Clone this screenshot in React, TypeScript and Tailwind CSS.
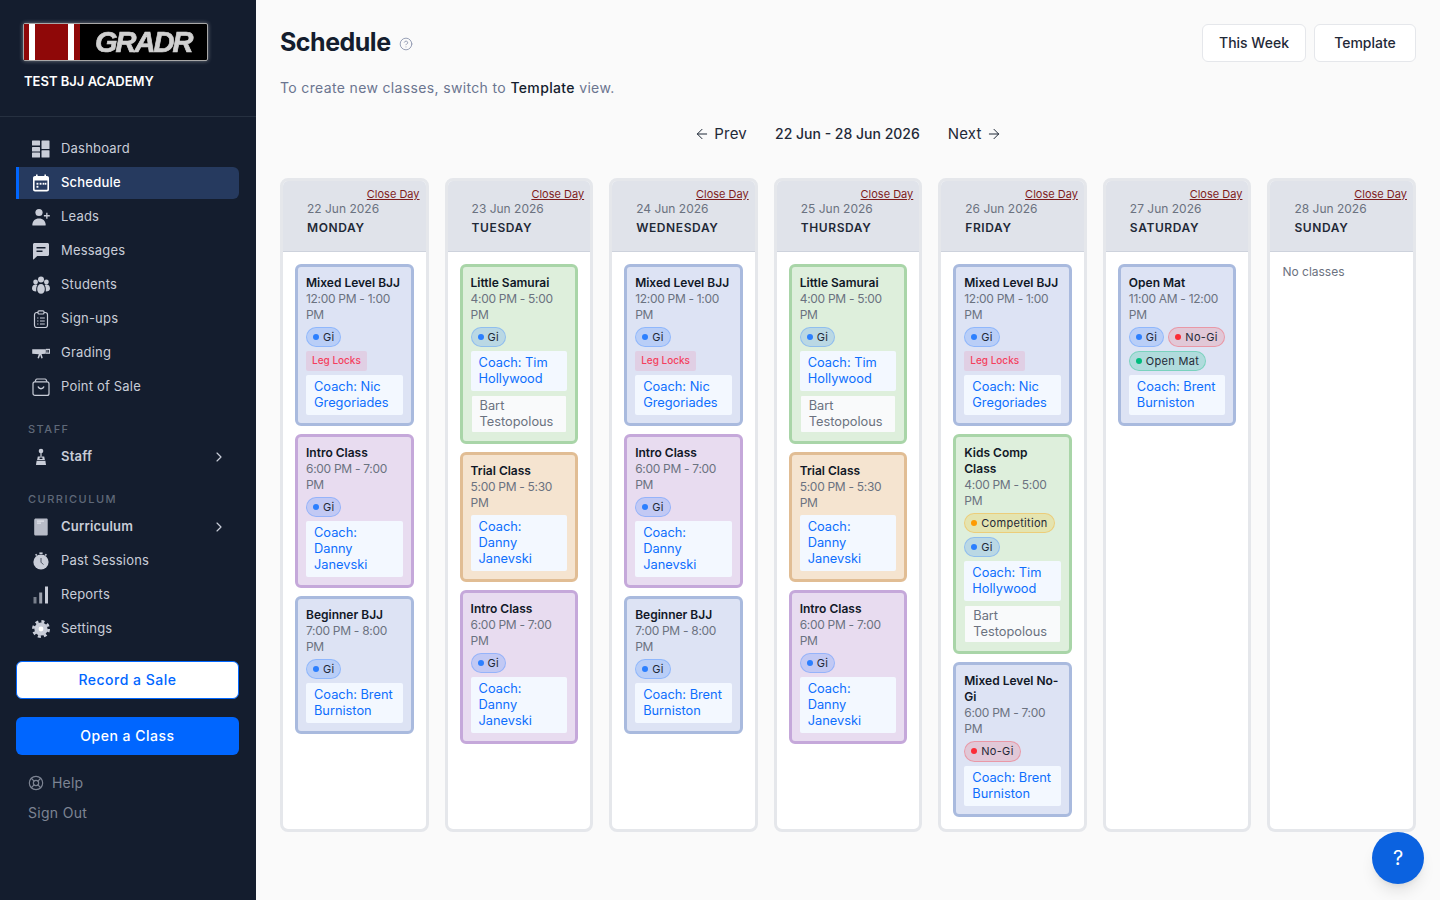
import { ArrowLeft, ArrowRight, ChevronRight, CircleHelp, LifeBuoy } from 'lucide-react'
import type { ReactNode } from 'react'

type Tone = 'blue' | 'green' | 'purple' | 'orange'
type ChipKind = 'gi' | 'nogi' | 'openmat' | 'comp'

interface ClassItem {
  title: string
  time: string
  tone: Tone
  chips: ChipKind[]
  legLocks?: boolean
  coach: string
  assistant?: string
}

interface Day {
  date: string
  name: string
  classes: ClassItem[]
}

const toneClasses: Record<Tone, string> = {
  blue: 'border-[#a9bade] bg-[#dde3f4]',
  green: 'border-[#a9d5a8] bg-[#deefdc]',
  purple: 'border-[#c5a8da] bg-[#e8dcf0]',
  orange: 'border-[#e1bd94] bg-[#f5e4d0]',
}

const chipClasses: Record<ChipKind, { label: string; box: string; dot: string }> = {
  gi: { label: 'Gi', box: 'border-blue-500/30 bg-blue-500/20', dot: 'bg-blue-500' },
  nogi: { label: 'No-Gi', box: 'border-red-500/30 bg-red-500/15', dot: 'bg-red-500' },
  openmat: { label: 'Open Mat', box: 'border-emerald-500/30 bg-emerald-500/20', dot: 'bg-emerald-500' },
  comp: { label: 'Competition', box: 'border-amber-500/30 bg-amber-400/20', dot: 'bg-amber-500' },
}

const mixed: ClassItem = {
  title: 'Mixed Level BJJ',
  time: '12:00 PM - 1:00 PM',
  tone: 'blue',
  chips: ['gi'],
  legLocks: true,
  coach: 'Coach: Nic Gregoriades',
}
const intro: ClassItem = {
  title: 'Intro Class',
  time: '6:00 PM - 7:00 PM',
  tone: 'purple',
  chips: ['gi'],
  coach: 'Coach: Danny Janevski',
}
const beginner: ClassItem = {
  title: 'Beginner BJJ',
  time: '7:00 PM - 8:00 PM',
  tone: 'blue',
  chips: ['gi'],
  coach: 'Coach: Brent Burniston',
}
const samurai: ClassItem = {
  title: 'Little Samurai',
  time: '4:00 PM - 5:00 PM',
  tone: 'green',
  chips: ['gi'],
  coach: 'Coach: Tim Hollywood',
  assistant: 'Bart Testopolous',
}
const trial: ClassItem = {
  title: 'Trial Class',
  time: '5:00 PM - 5:30 PM',
  tone: 'orange',
  chips: [],
  coach: 'Coach: Danny Janevski',
}

const days: Day[] = [
  { date: '22 Jun 2026', name: 'MONDAY', classes: [mixed, intro, beginner] },
  { date: '23 Jun 2026', name: 'TUESDAY', classes: [samurai, trial, intro] },
  { date: '24 Jun 2026', name: 'WEDNESDAY', classes: [mixed, intro, beginner] },
  { date: '25 Jun 2026', name: 'THURSDAY', classes: [samurai, trial, intro] },
  {
    date: '26 Jun 2026',
    name: 'FRIDAY',
    classes: [
      mixed,
      {
        title: 'Kids Comp Class',
        time: '4:00 PM - 5:00 PM',
        tone: 'green',
        chips: ['comp', 'gi'],
        coach: 'Coach: Tim Hollywood',
        assistant: 'Bart Testopolous',
      },
      {
        title: 'Mixed Level No-Gi',
        time: '6:00 PM - 7:00 PM',
        tone: 'blue',
        chips: ['nogi'],
        coach: 'Coach: Brent Burniston',
      },
    ],
  },
  {
    date: '27 Jun 2026',
    name: 'SATURDAY',
    classes: [
      {
        title: 'Open Mat',
        time: '11:00 AM - 12:00 PM',
        tone: 'blue',
        chips: ['gi', 'nogi', 'openmat'],
        coach: 'Coach: Brent Burniston',
      },
    ],
  },
  { date: '28 Jun 2026', name: 'SUNDAY', classes: [] },
]

function Icon({ children }: { children: ReactNode }) {
  return (
    <svg viewBox="0 0 18 18" className="h-[18px] w-[18px] shrink-0" fill="currentColor">
      {children}
    </svg>
  )
}

const DashboardIcon = () => (
  <Icon>
    <rect x="0" y="0.5" width="8" height="5" rx="0.5" />
    <rect x="0" y="7" width="8" height="4.5" rx="0.5" />
    <rect x="0" y="12.5" width="8" height="5" rx="0.5" />
    <rect x="9.5" y="0.5" width="8" height="8.5" rx="0.5" />
    <rect x="9.5" y="10.3" width="8" height="7.2" rx="0.5" />
  </Icon>
)

const CalendarIcon = () => (
  <Icon>
    <path
      fillRule="evenodd"
      d="M4 0.5h1.6v1.6h6.8V0.5H14v1.6h1c1.1 0 2 .9 2 2v11.4c0 1.1-.9 2-2 2H3c-1.1 0-2-.9-2-2V4.1c0-1.1.9-2 2-2h1V0.5ZM2.6 6.6v8.7c0 .2.2.4.4.4h12c.2 0 .4-.2.4-.4V6.6H2.6Z"
    />
    <rect x="4.5" y="8.8" width="1.9" height="1.9" />
    <rect x="7.6" y="8.8" width="1.9" height="1.9" />
    <rect x="10.6" y="8.8" width="1.9" height="1.9" />
    <rect x="13" y="8.8" width="1.4" height="1.9" />
    <rect x="4.5" y="11.8" width="1.9" height="1.9" />
  </Icon>
)

const LeadsIcon = () => (
  <Icon>
    <circle cx="7" cy="4.5" r="3.6" />
    <path d="M0.3 17c0-3.9 2.7-6.6 6.7-6.6s6.7 2.7 6.7 6.6c0 .4-.3.6-.6.6H.9c-.3 0-.6-.2-.6-.6Z" />
    <path d="M14.2 4.8h1.3v2.3h2.3v1.3h-2.3v2.3h-1.3V8.4h-2.3V7.1h2.3V4.8Z" />
  </Icon>
)

const MessagesIcon = () => (
  <Icon>
    <path
      fillRule="evenodd"
      d="M2.5 1h13c.8 0 1.5.7 1.5 1.5v10c0 .8-.7 1.5-1.5 1.5H5.2L1.6 17.4c-.2.2-.6.1-.6-.3V2.5C1 1.7 1.7 1 2.5 1ZM4.5 5v1.6h9V5h-9Zm0 3.4V10h6V8.4h-6Z"
    />
  </Icon>
)

const StudentsIcon = () => (
  <Icon>
    <circle cx="9" cy="3.6" r="3" />
    <circle cx="3.6" cy="6" r="2.4" />
    <circle cx="14.4" cy="6" r="2.4" />
    <path d="M0 12.5c0-2.6 1.5-4 3.6-4 .7 0 1.3.2 1.8.4-.8 1-1.2 2.3-1.2 3.9v2.6C1.6 15.4 0 14.5 0 12.5Zm18 0c0 2-1.6 2.9-4.2 2.9v-2.6c0-1.6-.4-2.9-1.2-3.9.5-.2 1.1-.4 1.8-.4 2.1 0 3.6 1.4 3.6 4Z" />
    <path d="M5.2 13c0-3 1.5-5 3.8-5s3.8 2 3.8 5c0 3.2-1.5 4.8-3.8 4.8S5.2 16.2 5.2 13Z" />
  </Icon>
)

const SignupsIcon = () => (
  <svg viewBox="0 0 18 18" className="h-[18px] w-[18px] shrink-0" fill="none" stroke="currentColor">
    <rect x="2.5" y="2.5" width="13" height="15" rx="2.2" strokeWidth="1.2" />
    <rect x="6" y="0.8" width="6" height="3.2" rx="1" fill="#141d2e" strokeWidth="1.2" />
    <path d="M5.2 8h1.2M8 8h4.8M5.2 11h1.2M8 11h4.8M5.2 14h1.2M8 14h4.8" strokeWidth="1.2" />
  </svg>
)

const GradingIcon = () => (
  <Icon>
    <path d="M0.2 5.2h13.6v4.6c-4.6.6-9 .6-13.6 0V5.2Z" />
    <path d="M13.8 4.8H18v5h-4.2V4.8Z" />
    <path d="M7 9.5h2.4l1.4 4.6-1.4.4L8.2 11l-1.3 3.5-1.4-.4L7 9.5Z" />
    <rect x="14.4" y="6" width="1.2" height="2.6" fill="#141d2e" />
    <rect x="16.2" y="6" width="0.8" height="2.6" fill="#141d2e" />
  </Icon>
)

const SaleIcon = () => (
  <svg viewBox="0 0 18 18" className="h-[18px] w-[18px] shrink-0" fill="none" stroke="currentColor" strokeWidth="1.2">
    <rect x="1" y="3.8" width="16" height="13.6" rx="2" />
    <path d="M3 3.8 4 1.6c.2-.4.5-.6.9-.6h8.2c.4 0 .7.2.9.6l1 2.2" />
    <path d="M6 8.6c.6 1.5 1.6 2.2 3 2.2s2.4-.7 3-2.2" strokeWidth="1.4" />
  </svg>
)

const StaffIcon = () => (
  <Icon>
    <circle cx="9" cy="3" r="2.3" />
    <rect x="8.4" y="4.5" width="1.2" height="4" />
    <path d="M5.8 8.5h6.4l.7 3.4-7.8 0 .7-3.4Z" />
    <path d="M4.6 12.8h8.8l.6 4.2H4l.6-4.2Z" />
    <rect x="7.4" y="9.6" width="3.2" height="1.4" rx="0.7" fill="#141d2e" />
  </Icon>
)

const CurriculumIcon = () => (
  <Icon>
    <path
      fillRule="evenodd"
      d="M3.8.5h11c.5 0 .9.4.9.9v15.2c0 .5-.4.9-.9.9h-11c-.9 0-1.6-.7-1.6-1.6V2.1c0-.9.7-1.6 1.6-1.6Z"
      opacity="0.9"
    />
    <rect x="5" y="2.6" width="7" height="1" fill="#e8eaf0" />
    <rect x="5" y="4.6" width="4" height="1" fill="#e8eaf0" />
  </Icon>
)

const StopwatchIcon = () => (
  <Icon>
    <circle cx="9" cy="10" r="7.6" />
    <rect x="7.4" y="0.4" width="3.2" height="1.6" />
    <path d="M3 2.8 4.2 1.8l1.2 1.2-1.2 1L3 2.8Zm12 0-1.2-1-1.2 1.2 1.2 1 1.2-1.2Z" />
    <path d="M9 6v4.2l2.4 2.4" fill="none" stroke="#141d2e" strokeWidth="1" opacity="0.7" />
  </Icon>
)

const ReportsIcon = () => (
  <Icon>
    <rect x="1.5" y="11" width="3" height="6.5" opacity="0.55" />
    <rect x="7.2" y="6.5" width="3" height="11" opacity="0.75" />
    <rect x="13" y="0.5" width="3" height="17" />
  </Icon>
)

const GearIcon = () => (
  <Icon>
    <circle cx="9" cy="9" r="6.6" />
    <circle cx="9" cy="9" r="7.6" fill="none" stroke="currentColor" strokeWidth="2.8" strokeDasharray="3 3" />
    <circle cx="9" cy="9" r="2.4" fill="#ffffff" />
  </Icon>
)

function NavItem({ icon, label, active, bold, chevron }: { icon: ReactNode; label: string; active?: boolean; bold?: boolean; chevron?: boolean }) {
  return (
    <div
      className={
        active
          ? 'flex h-8 items-center rounded-r-md border-l-[3px] border-[#0066ff] bg-[#263a5f] pl-[13px] pr-3 text-white'
          : 'flex h-8 items-center pl-4 pr-3 text-[#c9cdd8]'
      }
    >
      {icon}
      <span className={`ml-[11px] flex-1 text-[13px] tracking-[0.2px] ${bold ? 'font-semibold' : active ? 'font-medium' : ''}`}>{label}</span>
      {chevron && <ChevronRight className="h-4 w-4 text-[#c9cdd8]" strokeWidth={1.75} />}
    </div>
  )
}

function Sidebar() {
  return (
    <aside className="flex h-screen w-64 shrink-0 flex-col bg-[#141d2e]">
      <div className="h-[117px] border-b border-[#263040] pl-[23px] pt-[23px]">
        <div className="flex h-[38px] w-[185px] overflow-hidden rounded-[2px] border border-[#a8a8a8] bg-black shadow-[0_0_4px_rgba(255,255,255,0.4)]">
          <div className="w-[5px] bg-[#8f0808]" />
          <div className="w-[6px] bg-white" />
          <div className="w-[33px] bg-[#8f0808]" />
          <div className="w-[6px] bg-white" />
          <div className="w-[6px] bg-[#8f0808]" />
          <div className="flex flex-1 items-center pl-[15px]">
            <span className="font-['Liberation_Sans',sans-serif] text-[29px] font-bold italic leading-none tracking-[-2px] text-[#d0d0d0] blur-[0.4px] [-webkit-text-stroke:0.7px_#d0d0d0]">
              GRADR
            </span>
          </div>
        </div>
        <div className="ml-px mt-3 text-[13px] font-semibold leading-4 text-white">TEST BJJ ACADEMY</div>
      </div>

      <nav className="flex flex-col gap-0.5 pl-4 pr-[17px] pt-4">
        <NavItem icon={<DashboardIcon />} label="Dashboard" />
        <NavItem icon={<CalendarIcon />} label="Schedule" active />
        <NavItem icon={<LeadsIcon />} label="Leads" />
        <NavItem icon={<MessagesIcon />} label="Messages" />
        <NavItem icon={<StudentsIcon />} label="Students" />
        <NavItem icon={<SignupsIcon />} label="Sign-ups" />
        <NavItem icon={<GradingIcon />} label="Grading" />
        <NavItem icon={<SaleIcon />} label="Point of Sale" />
        <div className="mb-0.5 mt-4 pl-3 text-[11px] font-medium leading-4 tracking-[1.5px] text-[#5f6878]">STAFF</div>
        <NavItem icon={<StaffIcon />} label="Staff" bold chevron />
        <div className="mb-0.5 mt-4 pl-3 text-[11px] font-medium leading-4 tracking-[1.5px] text-[#5f6878]">CURRICULUM</div>
        <NavItem icon={<CurriculumIcon />} label="Curriculum" bold chevron />
        <NavItem icon={<StopwatchIcon />} label="Past Sessions" />
        <NavItem icon={<ReportsIcon />} label="Reports" />
        <NavItem icon={<GearIcon />} label="Settings" />
      </nav>

      <div className="flex flex-col gap-[18px] pl-4 pr-[17px] pt-4">
        <button className="h-[38px] rounded-md border border-[#0066ff] bg-white text-sm font-medium tracking-[0.5px] text-[#0066ff]">Record a Sale</button>
        <button className="h-[38px] rounded-md bg-[#0066ff] text-sm font-medium tracking-[0.5px] text-white">Open a Class</button>
      </div>

      <div className="flex items-center gap-2 pl-7 pt-[18px] text-sm leading-5 tracking-[0.2px] text-[#7d8493]">
        <LifeBuoy className="h-4 w-4" strokeWidth={1.75} />
        Help
      </div>
      <div className="pl-7 pt-2.5 text-sm leading-5 tracking-[0.3px] text-[#7d8493]">Sign Out</div>
    </aside>
  )
}

function ClassCard({ item }: { item: ClassItem }) {
  return (
    <div className={`rounded-md border-[3px] p-2 ${toneClasses[item.tone]}`}>
      <div className="text-xs font-semibold leading-4 text-[#111827]">{item.title}</div>
      <div className="text-xs leading-4 tracking-[-0.3px] text-[#6b7280]">{item.time}</div>
      {item.chips.length > 0 && (
        <div className="mt-1 flex flex-wrap gap-1">
          {item.chips.map((c) => (
            <span key={c} className={`inline-flex h-[20.2px] items-center gap-1 rounded-full border px-1.5 text-[11px] tracking-[0.3px] text-[#1f2937] ${chipClasses[c].box}`}>
              <span className={`h-1.5 w-1.5 rounded-full ${chipClasses[c].dot}`} />
              {chipClasses[c].label}
            </span>
          ))}
        </div>
      )}
      {item.legLocks && (
        <div className="mt-1 w-fit rounded-[2px] bg-rose-500/10 px-1.5 text-[10px] font-medium leading-[19.8px] text-[#f43f5e]">Leg Locks</div>
      )}
      <div className="mt-1 rounded-[2px] bg-[#f3f8ff] px-2 py-1 text-[12.8px] leading-4 text-[#0d6efd]">{item.coach}</div>
      {item.assistant && (
        <div className="mt-1 rounded-[2px] border border-transparent bg-[#f9fafb] bg-clip-padding px-2 py-0.5 text-[12.8px] leading-4 text-[#6b7280]">
          {item.assistant}
        </div>
      )}
    </div>
  )
}

function DayColumn({ day }: { day: Day }) {
  return (
    <div className="overflow-hidden rounded-lg border-[3px] border-[#e5e7eb] bg-white">
      <div className="border-b border-[#cdd2dc] bg-[#e0e3ea] pb-[15px] pt-1.5">
        <div className="h-[14px] pr-1.5 text-right text-[11px] leading-[14px] text-[#7f1d1d] underline">Close Day</div>
        <div className="pl-6 text-xs leading-4 text-[#6b7280]">{day.date}</div>
        <div className="mt-[3px] pl-6 text-xs font-semibold leading-4 tracking-[0.6px] text-[#1f2937]">{day.name}</div>
      </div>
      {day.classes.length > 0 ? (
        <div className="flex flex-col gap-2 px-3 pt-3">
          {day.classes.map((c, i) => (
            <ClassCard key={i} item={c} />
          ))}
        </div>
      ) : (
        <div className="px-3 pt-3 text-xs leading-4 text-[#6b7280]">No classes</div>
      )}
    </div>
  )
}

export default function App() {
  return (
    <div className="relative flex h-screen overflow-hidden bg-[#fafafa] font-['Inter',sans-serif]">
      <Sidebar />
      <main className="flex-1 px-6 pt-6">
        <div className="flex items-start justify-between">
          <div className="flex h-[38px] items-center gap-2">
            <h1 className="text-[25px] font-bold tracking-[-0.5px] text-[#141d2e]">Schedule</h1>
            <CircleHelp className="mt-0.5 h-[14px] w-[14px] text-[#8a93ad]" strokeWidth={1.5} />
          </div>
          <div className="flex gap-2">
            <button className="h-[38px] w-[104px] rounded-md border border-[#e5e7eb] bg-white text-sm font-medium text-[#1f2937]">This Week</button>
            <button className="h-[38px] w-[102px] rounded-md border border-[#e5e7eb] bg-white text-sm font-medium text-[#1f2937]">Template</button>
          </div>
        </div>
        <p className="mt-4 text-sm leading-5 tracking-[0.35px] text-[#6b7590]">
          To create new classes, switch to <span className="font-medium text-[#141d2e]">Template</span> view.
        </p>
        <div className="mt-[26px] flex items-center justify-center gap-7 text-[15px] leading-5 tracking-[0.2px] text-[#1f2937]">
          <span className="flex items-center gap-1">
            <ArrowLeft className="h-4 w-4" strokeWidth={1.5} />
            Prev
          </span>
          <span className="text-sm font-medium tracking-normal">22 Jun - 28 Jun 2026</span>
          <span className="flex items-center gap-1">
            Next
            <ArrowRight className="h-4 w-4" strokeWidth={1.5} />
          </span>
        </div>
        <div className="mt-[34px] grid h-[654px] grid-cols-7 gap-4">
          {days.map((d) => (
            <DayColumn key={d.name} day={d} />
          ))}
        </div>
      </main>
      <button className="absolute bottom-4 right-4 flex h-[52px] w-[52px] items-center justify-center rounded-full bg-[#0b62e0] text-xl text-white shadow-lg">?</button>
    </div>
  )
}
